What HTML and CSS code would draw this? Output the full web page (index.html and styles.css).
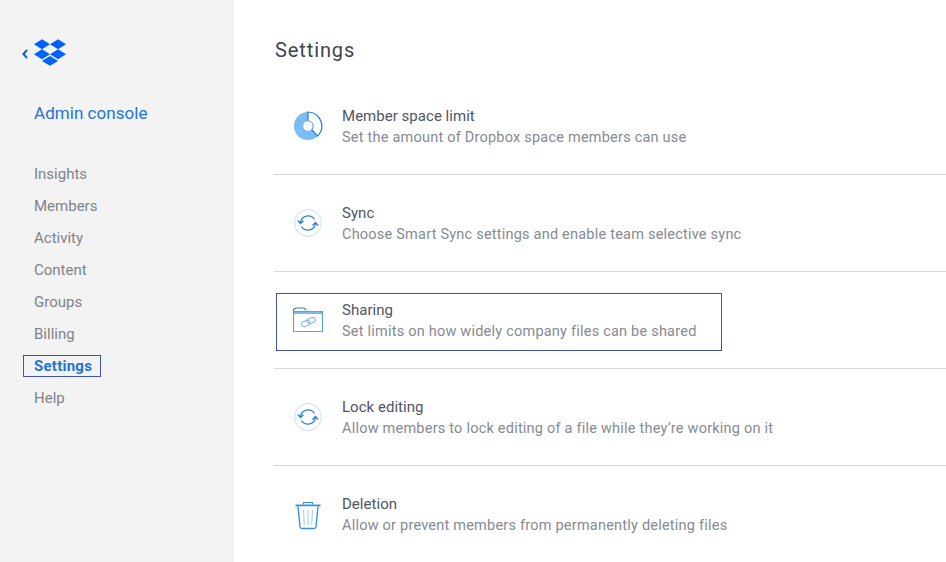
FILE: index.html
```html
<!DOCTYPE html>
<html lang="en">
<head>
<meta charset="utf-8">
<title>Settings</title>
<link rel="stylesheet" href="styles.css">
</head>
<body>
<div class="page">
  <aside class="sidebar">
    <div class="brand">
      <svg class="back" width="6" height="10" viewBox="0 0 6 10"><path d="M5 1 L1.4 5 L5 9" fill="none" stroke="#0d62e0" stroke-width="2"/></svg>
      <svg class="logo" width="32" height="27" viewBox="0 0 33 27.5"><path fill="#0061fe" d="M8.2 0 L16.5 5.2 L8.2 10.4 L0 5.2Z M24.8 0 L33 5.2 L24.8 10.4 L16.5 5.2Z M0 15.6 L8.2 10.4 L16.5 15.6 L8.2 20.8Z M24.8 10.4 L33 15.6 L24.8 20.8 L16.5 15.6Z M8.2 22.5 L16.5 17.3 L24.8 22.5 L16.5 27.5Z"/></svg>
    </div>
    <h2 class="console">Admin console</h2>
    <nav class="nav">
      <a class="nav-item">Insights</a>
      <a class="nav-item">Members</a>
      <a class="nav-item">Activity</a>
      <a class="nav-item">Content</a>
      <a class="nav-item">Groups</a>
      <a class="nav-item">Billing</a>
      <a class="nav-item active">Settings</a>
      <a class="nav-item">Help</a>
    </nav>
  </aside>
  <main class="main">
    <h1 class="title">Settings</h1>
    <div class="row">
      <svg class="icon" width="30" height="30" viewBox="0 0 30 30">
        <circle cx="15" cy="15" r="14" fill="#7dbbf3"/>
        <path d="M15 1 A14 14 0 0 1 24.5 25 L18.5 18.5 A5 5 0 0 0 15 10Z" fill="#fff" stroke="#1f82d8" stroke-width="1.2"/>
        <circle cx="15" cy="15" r="4.8" fill="#fff"/>
      </svg>
      <div class="text"><div class="name">Member space limit</div><div class="desc">Set the amount of Dropbox space members can use</div></div>
    </div>
    <div class="row">
      <svg class="icon" width="30" height="30" viewBox="0 0 30 30">
        <circle cx="15" cy="15" r="13.5" fill="#fff" stroke="#c3e0f8" stroke-width="1"/>
        <path d="M7.5 14.5 A7.6 7.6 0 0 1 21.5 11.5 M22.5 15.5 A7.6 7.6 0 0 1 8.5 18.5" fill="none" stroke="#2a86d6" stroke-width="1.4"/>
        <path d="M4.8 12.5 L7.5 15.5 L10.5 12.8 M19.5 17.5 L22.5 14.5 L25.2 17.5" fill="none" stroke="#2a86d6" stroke-width="1.4"/>
      </svg>
      <div class="text"><div class="name">Sync</div><div class="desc">Choose Smart Sync settings and enable team selective sync</div></div>
    </div>
    <div class="row focus-row">
      <div class="focus">
        <svg class="icon" width="30" height="30" viewBox="0 0 30 30">
          <path d="M0.5 6.5 H29.5 V26.5 H0.5Z" fill="#fff" stroke="#4ea6e8" stroke-width="1.2"/>
          <path d="M0.5 6.5 V4.5 L3 3 H11 L13 5" fill="none" stroke="#2a86d6" stroke-width="1.2"/>
          <path d="M0.5 8 H29.5" stroke="#2a86d6" stroke-width="1.2"/>
          <rect x="8.5" y="16" width="8.5" height="5" rx="2.5" transform="rotate(-20 12.7 18.5)" fill="none" stroke="#7dbbf0" stroke-width="1.1"/>
          <rect x="14" y="13" width="8.5" height="5" rx="2.5" transform="rotate(-20 18.2 15.5)" fill="none" stroke="#7dbbf0" stroke-width="1.1"/>
        </svg>
        <div class="text"><div class="name">Sharing</div><div class="desc">Set limits on how widely company files can be shared</div></div>
      </div>
    </div>
    <div class="row">
      <svg class="icon" width="30" height="30" viewBox="0 0 30 30">
        <circle cx="15" cy="15" r="13.5" fill="#fff" stroke="#c3e0f8" stroke-width="1"/>
        <path d="M7.5 14.5 A7.6 7.6 0 0 1 21.5 11.5 M22.5 15.5 A7.6 7.6 0 0 1 8.5 18.5" fill="none" stroke="#2a86d6" stroke-width="1.4"/>
        <path d="M4.8 12.5 L7.5 15.5 L10.5 12.8 M19.5 17.5 L22.5 14.5 L25.2 17.5" fill="none" stroke="#2a86d6" stroke-width="1.4"/>
      </svg>
      <div class="text"><div class="name">Lock editing</div><div class="desc">Allow members to lock editing of a file while they’re working on it</div></div>
    </div>
    <div class="row">
      <svg class="icon" width="30" height="30" viewBox="0 0 30 30">
        <path d="M2.5 5.5 H27.5" stroke="#3a93dd" stroke-width="2"/>
        <path d="M10.5 4.5 V2.5 H19.5 V4.5" fill="none" stroke="#3a93dd" stroke-width="1.2"/>
        <path d="M5 6.5 L7 27 Q7.2 28.5 9 28.5 H21 Q22.8 28.5 23 27 L25 6.5" fill="#fff" stroke="#3a93dd" stroke-width="1.4"/>
        <path d="M10.5 10 L11.3 25 M15 10 V25 M19.5 10 L18.7 25" stroke="#a5d0f2" stroke-width="1.1"/>
      </svg>
      <div class="text"><div class="name">Deletion</div><div class="desc">Allow or prevent members from permanently deleting files</div></div>
    </div>
  </main>
</div>
</body>
</html>
```
FILE: styles.css
```css
* { box-sizing: border-box; }
html, body { margin: 0; height: 100%; overflow: hidden; background: #fff; }
body { font-family: Roboto, "Liberation Sans", sans-serif; }
.page { display: flex; width: 946px; height: 562px; overflow: hidden; }
.sidebar { width: 234px; flex: none; background: #f3f3f4; padding: 39px 0 0 22px; }
.brand { display: flex; align-items: flex-start; gap: 6px; height: 28px; }
.back { margin-top: 10px; }
.console { margin: 34px 0 0 12px; font-size: 17px; font-weight: 400; line-height: 24px; letter-spacing: 0.05px; color: #1f73d6; }
.nav { display: flex; flex-direction: column; align-items: flex-start; gap: 10px; margin: 38px 0 0 1px; }
.nav-item { height: 22px; line-height: 20px; padding: 0 8px 0 10px; border: 1px solid transparent; font-size: 15px; letter-spacing: 0; color: #7f8288; }
.nav-item.active { border-color: #3f51b5; color: #1f73d6; font-weight: 700; letter-spacing: 0.25px; }
.main { flex: 1; padding: 0 0 0 40px; min-width: 0; }
.title { margin: 37px 0 0 1px; font-size: 20px; font-weight: 400; line-height: 26px; letter-spacing: 0.9px; color: #3d4450; }
.row { display: flex; align-items: center; height: 97px; padding-left: 19px; gap: 19px; border-bottom: 1px solid #d6d7da; }
.row:first-of-type { height: 112px; padding-top: 15px; }
.row:last-child { border-bottom: 0; }
.focus-row { padding: 4px 0 0 2px; }
.focus { display: flex; align-items: center; gap: 19px; width: 446px; height: 58px; padding: 0 0 4px 16px; border: 1px solid #3f51b5; }
.icon { flex: none; }
.text { white-space: nowrap; padding-top: 1px; }
.name { font-size: 15px; line-height: 20px; letter-spacing: 0.03px; color: #4f5563; }
.desc { font-size: 14.5px; line-height: 20px; margin-top: 2px; letter-spacing: 0.22px; color: #868a92; }
```
